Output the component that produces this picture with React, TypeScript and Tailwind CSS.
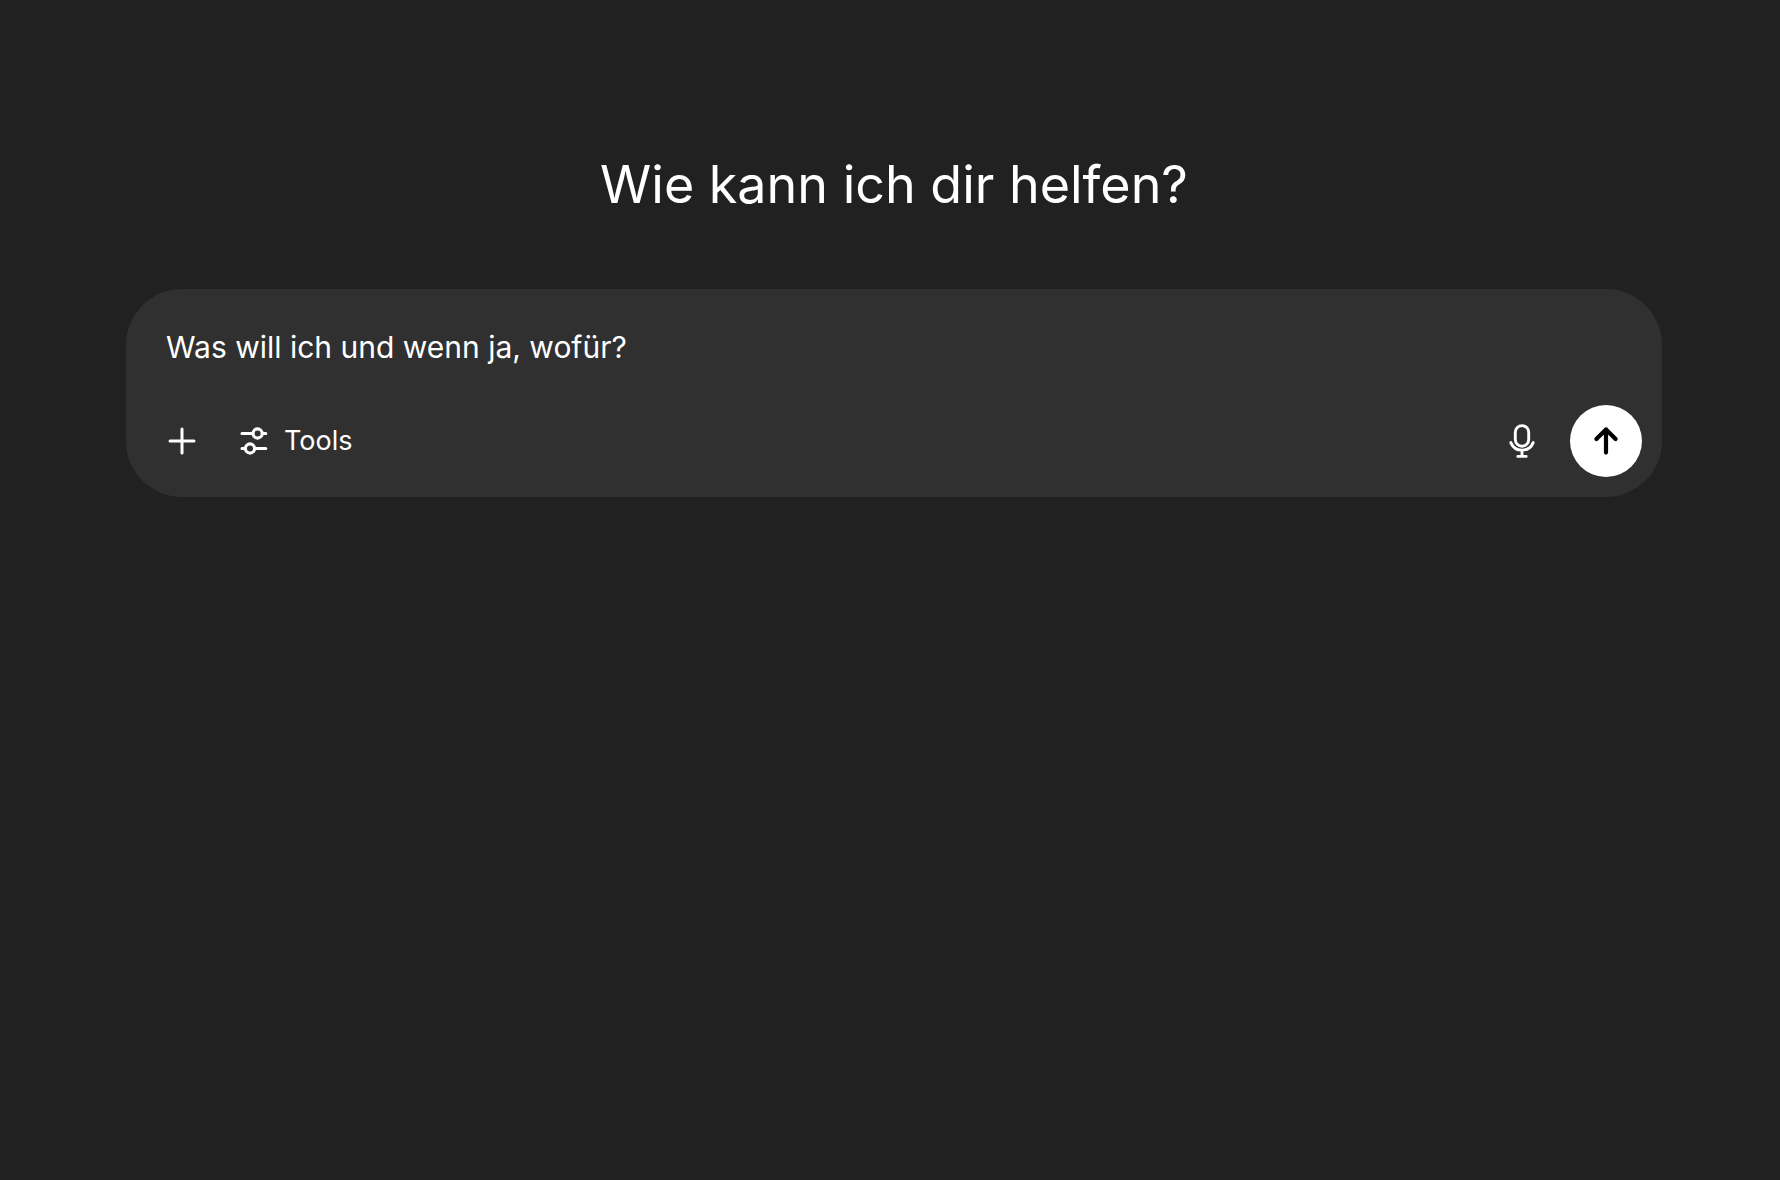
import React, { useState } from 'react';

const PlusIcon = () => (
  <svg className="w-10 h-10" viewBox="0 0 40 40" fill="none" stroke="currentColor" strokeWidth="3" strokeLinecap="round" aria-hidden="true">
    <path d="M20 8v24M8 20h24" />
  </svg>
);

const SlidersIcon = () => (
  <svg className="w-10 h-10" viewBox="0 0 40 40" fill="none" stroke="currentColor" strokeWidth="3.1" strokeLinecap="round" aria-hidden="true">
    <path d="M8 12.5h10.8M28.4 12.5h3.4M8 27.5h3.2M20.8 27.5h11" />
    <circle cx="23.6" cy="12.5" r="4.6" />
    <circle cx="16" cy="27.5" r="4.6" />
  </svg>
);

const MicIcon = () => (
  <svg className="w-10 h-10" viewBox="0 0 40 40" fill="none" stroke="currentColor" strokeWidth="2.9" strokeLinecap="round" strokeLinejoin="round" aria-hidden="true">
    <rect x="13.3" y="4.6" width="13.4" height="20.6" rx="6.7" />
    <path d="M8.8 21.6a12.1 12.1 0 0 0 22.4 0M20 29.5v5.8M15.8 35.4h8.4" />
  </svg>
);

const ArrowUpIcon = () => (
  <svg className="w-10 h-10" viewBox="0 0 40 40" fill="none" stroke="currentColor" strokeWidth="4.2" strokeLinecap="round" strokeLinejoin="round" aria-hidden="true">
    <path d="M20 31.6V8.4M10.4 18L20 8.4l9.6 9.6" />
  </svg>
);

const IconButton: React.FC<{ label: string; children: React.ReactNode }> = ({ label, children }) => (
  <button type="button" aria-label={label} className="flex h-18 w-18 items-center justify-center rounded-full hover:bg-white/10">
    {children}
  </button>
);

const App: React.FC = () => {
  const [prompt, setPrompt] = useState('Was will ich und wenn ja, wofür?');

  return (
    <main className="min-h-screen bg-[#212121] pt-[153px] pr-[118px] pl-[126px] font-['Inter',sans-serif] text-white">
      <h1 className="text-center text-[52px] leading-16">Wie kann ich dir helfen?</h1>

      <form
        onSubmit={(e) => e.preventDefault()}
        className="mt-18 rounded-[56px] bg-[#303030] px-5 pt-[34px] pb-5"
      >
        <input
          type="text"
          aria-label="Nachricht"
          value={prompt}
          onChange={(e) => setPrompt(e.target.value)}
          className="block h-12 w-full bg-transparent px-5 text-[30px] outline-none"
        />
        <div className="mt-[34px] flex items-center justify-between">
          <div className="flex items-center">
            <IconButton label="Hinzufügen">
              <PlusIcon />
            </IconButton>
            <button type="button" className="flex h-18 items-center gap-2.5 rounded-full px-4 text-[27px] hover:bg-white/10">
              <SlidersIcon />
              Tools
            </button>
          </div>
          <div className="flex items-center gap-3">
            <IconButton label="Diktieren">
              <MicIcon />
            </IconButton>
            <button type="submit" aria-label="Senden" className="flex h-18 w-18 items-center justify-center rounded-full bg-white text-black">
              <ArrowUpIcon />
            </button>
          </div>
        </div>
      </form>
    </main>
  );
};

export default App;
